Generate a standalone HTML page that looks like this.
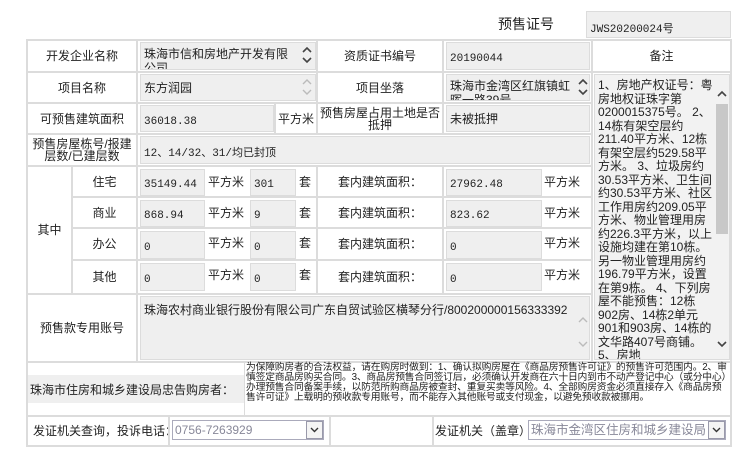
<!DOCTYPE html>
<html><head><meta charset="utf-8"><style>
*{box-sizing:border-box;margin:0;padding:0}
body{width:750px;height:450px;background:#fff;position:relative;overflow:hidden;font-family:"Liberation Sans","Noto Sans CJK SC",sans-serif;font-size:12px;color:#222}
.c{position:absolute;border:2px solid #dcdcdc;display:flex;align-items:center;justify-content:center;text-align:center;line-height:12px;background:#fff;white-space:nowrap}
.i{position:absolute;background:#efefef;border:1px solid #dcdcdc;font-size:11px;padding:0 3px;display:flex;align-items:center;font-family:"Liberation Mono","Noto Sans CJK SC",monospace;white-space:nowrap;overflow:hidden}
.t{position:absolute;font-size:12px;white-space:nowrap}
.cj{font-family:"Liberation Sans","Noto Sans CJK SC",sans-serif;font-size:12px}
svg.a{position:absolute}
</style></head><body>
<div class="t" style="left:498px;top:14px;font-size:14px">预售证号</div>
<div class="i" style="left:586px;top:11px;width:145px;height:27px;padding-top:6px">JWS20200024号</div>

<div class="c" style="left:26px;top:39px;width:112px;height:34px">开发企业名称</div>
<div class="c" style="left:136px;top:39px;width:182px;height:34px"></div>
<div class="i cj" style="left:140px;top:42px;width:176px;height:28px;align-items:flex-start;white-space:normal;line-height:14px;padding:4px 20px 0 3px">珠海市信和房地产开发有限公司</div>
<svg class="a" style="left:301px;top:44px" width="12" height="22"><path d="M2 8 L6 4 L10 8 M2 14 L6 18 L10 14" stroke="#444" stroke-width="1.6" fill="none"/></svg>
<div class="c" style="left:316px;top:39px;width:128px;height:34px">资质证书编号</div>
<div class="c" style="left:442px;top:39px;width:151px;height:34px"></div>
<div class="i" style="left:446px;top:42px;width:144px;height:28px;padding-top:5px">20190044</div>
<div class="c" style="left:591px;top:39px;width:141px;height:34px">备注</div>

<div class="c" style="left:26px;top:71px;width:112px;height:33px">项目名称</div>
<div class="c" style="left:136px;top:71px;width:182px;height:33px"></div>
<div class="i cj" style="left:140px;top:74px;width:176px;height:27px;align-items:flex-start;padding-top:4px">东方润园</div>
<svg class="a" style="left:301px;top:76px" width="12" height="22"><path d="M2 8 L6 4 L10 8 M2 14 L6 18 L10 14" stroke="#bbb" stroke-width="1.4" fill="none"/></svg>
<div class="c" style="left:316px;top:71px;width:128px;height:33px">项目坐落</div>
<div class="c" style="left:442px;top:71px;width:151px;height:33px"></div>
<div class="i cj" style="left:446px;top:74px;width:144px;height:27px;align-items:flex-start;white-space:normal;line-height:14px;padding:4px 16px 0 3px">珠海市金湾区红旗镇虹晖一路39号</div>
<svg class="a" style="left:577px;top:76px" width="12" height="22"><path d="M2 8 L6 4 L10 8 M2 14 L6 18 L10 14" stroke="#444" stroke-width="1.6" fill="none"/></svg>

<div class="c" style="left:26px;top:102px;width:112px;height:33px">可预售建筑面积</div>
<div class="c" style="left:136px;top:102px;width:140px;height:33px"></div>
<div class="i" style="left:140px;top:105px;width:134px;height:27px;padding-top:6px">36018.38</div>
<div class="c" style="left:274px;top:102px;width:44px;height:33px">平方米</div>
<div class="c" style="left:316px;top:102px;width:128px;height:33px;white-space:normal">预售房屋占用土地是否抵押</div>
<div class="c" style="left:442px;top:102px;width:151px;height:33px"></div>
<div class="i cj" style="left:446px;top:105px;width:144px;height:27px">未被抵押</div>

<div class="c" style="left:26px;top:133px;width:112px;height:34px;white-space:normal;line-height:12px;padding:0 2px">预售房屋栋号/报建层数/已建层数</div>
<div class="c" style="left:136px;top:133px;width:457px;height:34px"></div>
<div class="i" style="left:140px;top:136px;width:450px;height:28px;padding-top:4px">12、14/32、31/均已封顶</div>

<div class="c" style="left:26px;top:165px;width:47px;height:130px">其中</div>
<div class="c" style="left:71px;top:165px;width:67px;height:33px">住宅</div>
<div class="c" style="left:71px;top:196px;width:67px;height:33px">商业</div>
<div class="c" style="left:71px;top:227px;width:67px;height:34px">办公</div>
<div class="c" style="left:71px;top:259px;width:67px;height:36px">其他</div>
<div class="c" style="left:136px;top:165px;width:182px;height:130px"></div>
<div class="c" style="left:316px;top:165px;width:128px;height:33px">套内建筑面积：</div>
<div class="c" style="left:316px;top:196px;width:128px;height:33px">套内建筑面积：</div>
<div class="c" style="left:316px;top:227px;width:128px;height:34px">套内建筑面积：</div>
<div class="c" style="left:316px;top:259px;width:128px;height:36px">套内建筑面积：</div>
<div class="c" style="left:442px;top:165px;width:151px;height:33px"></div>
<div class="c" style="left:442px;top:196px;width:151px;height:33px"></div>
<div class="c" style="left:442px;top:227px;width:151px;height:34px"></div>
<div class="c" style="left:442px;top:259px;width:151px;height:36px"></div>
<div style="position:absolute;left:136px;top:196px;width:182px;height:2px;background:#dcdcdc"></div>
<div style="position:absolute;left:136px;top:227px;width:182px;height:2px;background:#dcdcdc"></div>
<div style="position:absolute;left:136px;top:259px;width:182px;height:2px;background:#dcdcdc"></div>

<div class="i" style="left:140px;top:169px;width:65px;height:27px;padding-top:4px">35149.44</div>
<div class="i" style="left:140px;top:200px;width:65px;height:27px;padding-top:4px">868.94</div>
<div class="i" style="left:140px;top:231px;width:65px;height:28px;padding-top:6px">0</div>
<div class="i" style="left:140px;top:263px;width:65px;height:28px;padding-top:6px">0</div>
<div class="t" style="left:208px;top:173px">平方米</div>
<div class="t" style="left:208px;top:204px">平方米</div>
<div class="t" style="left:208px;top:234px">平方米</div>
<div class="t" style="left:208px;top:266px">平方米</div>
<div class="i" style="left:250px;top:169px;width:46px;height:27px;padding-top:4px">301</div>
<div class="i" style="left:250px;top:200px;width:46px;height:27px;padding-top:4px">9</div>
<div class="i" style="left:250px;top:231px;width:46px;height:28px;padding-top:6px">0</div>
<div class="i" style="left:250px;top:263px;width:46px;height:28px;padding-top:6px">0</div>
<div class="t" style="left:299px;top:173px">套</div>
<div class="t" style="left:299px;top:204px">套</div>
<div class="t" style="left:299px;top:234px">套</div>
<div class="t" style="left:299px;top:266px">套</div>
<div class="i" style="left:446px;top:169px;width:96px;height:27px;padding-top:4px">27962.48</div>
<div class="i" style="left:446px;top:200px;width:96px;height:27px;padding-top:4px">823.62</div>
<div class="i" style="left:446px;top:231px;width:96px;height:28px;padding-top:6px">0</div>
<div class="i" style="left:446px;top:263px;width:96px;height:28px;padding-top:6px">0</div>
<div class="t" style="left:544px;top:173px">平方米</div>
<div class="t" style="left:544px;top:204px">平方米</div>
<div class="t" style="left:544px;top:234px">平方米</div>
<div class="t" style="left:544px;top:266px">平方米</div>

<div class="c" style="left:26px;top:293px;width:112px;height:70px">预售款专用账号</div>
<div class="c" style="left:136px;top:293px;width:457px;height:70px"></div>
<div class="i cj" style="left:140px;top:296px;width:450px;height:64px;align-items:flex-start;padding-top:4px">珠海农村商业银行股份有限公司广东自贸试验区横琴分行/800200000156333392</div>
<svg class="a" style="left:577px;top:312px" width="12" height="40"><path d="M2 10 L6 6 L10 10 M2 30 L6 34 L10 30" stroke="#bbb" stroke-width="1.4" fill="none"/></svg>

<div class="c" style="left:591px;top:71px;width:141px;height:292px"></div>
<div class="i cj" style="left:594px;top:74px;width:136px;height:286px;align-items:flex-start;white-space:normal;line-height:13.5px;padding:4px 16px 0 3px;background:#f2f2f2">1、房地产权证号：粤房地权证珠字第0200015375号。 2、14栋有架空层约211.40平方米、12栋有架空层约529.58平方米。 3、垃圾房约30.53平方米、卫生间约30.53平方米、社区工作用房约209.05平方米、物业管理用房约226.3平方米，以上设施均建在第10栋。另一物业管理用房约196.79平方米，设置在第9栋。 4、下列房屋不能预售：12栋902房、14栋2单元901和903房、14栋的文华路407号商铺。 5、房地</div>
<div style="position:absolute;left:716px;top:104px;width:12px;height:130px;background:#c8c8c8"></div>
<svg class="a" style="left:716px;top:88px" width="12" height="12"><path d="M2 8 L6 4 L10 8" stroke="#444" stroke-width="1.6" fill="none"/></svg>
<svg class="a" style="left:716px;top:338px" width="12" height="12"><path d="M2 4 L6 8 L10 4" stroke="#444" stroke-width="1.6" fill="none"/></svg>

<div class="c" style="left:26px;top:361px;width:706px;height:56px"></div>
<div style="position:absolute;left:28px;top:375px;width:216px;height:28px;background:#efefef;font-size:12px;display:flex;align-items:center;padding-left:2px;white-space:nowrap">珠海市住房和城乡建设局忠告购房者：</div>
<div style="position:absolute;left:244px;top:363px;width:1px;height:52px;background:#dcdcdc"></div>
<div style="position:absolute;left:246px;top:363px;width:484px;font-size:9.8px;line-height:10px;letter-spacing:-0.2px">为保障购房者的合法权益，请在购房时做到：1、确认拟购房屋在《商品房预售许可证》的预售许可范围内。2、审慎签定商品房购买合同。3、商品房预售合同签订后，必须确认开发商在六十日内到市不动产登记中心（或分中心）办理预售合同备案手续，以防范所购商品房被查封、重复买卖等风险。4、全部购房资金必须直接存入《商品房预售许可证》上载明的预收款专用账号，而不能存入其他账号或支付现金，以避免预收款被挪用。</div>

<div class="c" style="left:26px;top:415px;width:144px;height:32px;justify-content:flex-start;padding-left:5px">发证机关查询，投诉电话：</div>
<div class="c" style="left:168px;top:415px;width:163px;height:32px"></div>
<div style="position:absolute;left:172px;top:420px;width:152px;height:20px;border:1px solid #aab;color:#889;padding-left:2px;font-size:12px;line-height:18px">0756-7263929</div>
<div style="position:absolute;left:306px;top:421px;width:17px;height:18px;border:1px solid #99a;background:#f4f4f4"><svg width="15" height="16"><path d="M4 6 L7.5 9.5 L11 6" stroke="#333" stroke-width="1.4" fill="none"/></svg></div>
<div class="c" style="left:329px;top:415px;width:105px;height:32px"></div>
<div class="c" style="left:432px;top:415px;width:300px;height:32px;justify-content:flex-start;padding-left:1px">发证机关（盖章）</div>
<div style="position:absolute;left:528px;top:420px;width:198px;height:20px;border:1px solid #aab;color:#889;padding-left:2px;font-size:12.5px;line-height:18px;background:#fff;white-space:nowrap;overflow:hidden">珠海市金湾区住房和城乡建设局</div>
<div style="position:absolute;left:708px;top:421px;width:17px;height:18px;border:1px solid #99a;background:#f4f4f4"><svg width="15" height="16"><path d="M4 6 L7.5 9.5 L11 6" stroke="#333" stroke-width="1.4" fill="none"/></svg></div>
</body></html>
